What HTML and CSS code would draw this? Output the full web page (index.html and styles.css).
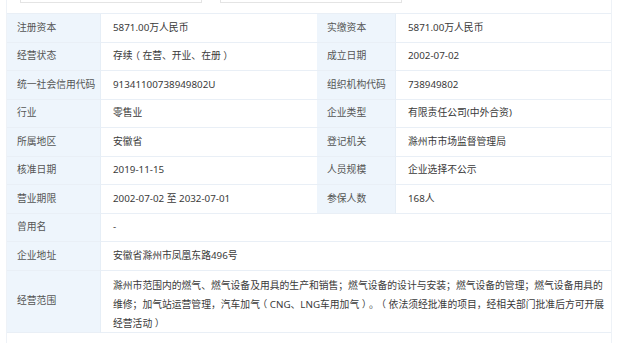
FILE: index.html
```html
<!DOCTYPE html>
<html lang="zh-CN">
<head>
<meta charset="utf-8">
<title>工商信息</title>
<link rel="stylesheet" href="styles.css">
</head>
<body>
<div class="info">
  <div class="search">
    <div class="box"></div>
    <div class="box"></div>
  </div>
  <div class="grid">
    <div class="lbl">注册资本</div><div class="val">5871.00万人民币</div>
    <div class="lbl">实缴资本</div><div class="val">5871.00万人民币</div>

    <div class="lbl">经营状态</div><div class="val">存续<span class="pb">（</span>在营、开业、在册<span class="pb">）</span></div>
    <div class="lbl">成立日期</div><div class="val">2002-07-02</div>

    <div class="lbl">统一社会信用代码</div><div class="val">91341100738949802U</div>
    <div class="lbl">组织机构代码</div><div class="val">738949802</div>

    <div class="lbl">行业</div><div class="val">零售业</div>
    <div class="lbl">企业类型</div><div class="val">有限责任公司(中外合资)</div>

    <div class="lbl">所属地区</div><div class="val">安徽省</div>
    <div class="lbl">登记机关</div><div class="val">滁州市市场监督管理局</div>

    <div class="lbl">核准日期</div><div class="val">2019-11-15</div>
    <div class="lbl">人员规模</div><div class="val">企业选择不公示</div>

    <div class="lbl">营业期限</div><div class="val">2002-07-02 至 2032-07-01</div>
    <div class="lbl">参保人数</div><div class="val">168人</div>

    <div class="lbl">曾用名</div><div class="val span3">-</div>

    <div class="lbl">企业地址</div><div class="val span3">安徽省滁州市凤凰东路496号</div>

    <div class="lbl tall">经营范围</div>
    <div class="val span3 scope">滁州市范围内的燃气、燃气设备及用具的生产和销售；燃气设备的设计与安装；燃气设备的管理；燃气设备用具的<br>维修；加气站运营管理，汽车加气<span class="pb">（</span>CNG、LNG车用加气<span class="pb">）</span><span class="pd">。</span><span class="pb">（</span>依法须经批准的项目，经相关部门批准后方可开展<br>经营活动<span class="pb">）</span></div>
  </div>
</div>
</body>
</html>
```

FILE: styles.css
```css
html, body {
  margin: 0;
  padding: 0;
  background: #ffffff;
}

body {
  font-family: "Noto Sans", "Noto Sans CJK SC", sans-serif;
  font-size: 9.8px;
  color: #333333;
  text-spacing-trim: space-all;
}

.pb,
.pd {
  font-family: "Noto Sans CJK SC", sans-serif;
  font-feature-settings: "halt" 1;
  display: inline-block;
  width: 1em;
}

.pb {
  text-align: center;
}

.pd {
  text-align: left;
}

.info {
  margin-left: 6px;
  width: 604px;
  height: 343px;
  border-left: 1px solid #eef2f7;
  border-right: 1px solid #eef2f7;
}

.search {
  display: flex;
  gap: 18px;
  padding-left: 13px;
  margin-bottom: 10px;
}

.box {
  width: 180px;
  height: 2px;
  background: #ffffff;
  border: 1px solid #e4e4e4;
  border-top: none;
}

.grid {
  display: grid;
  grid-template-columns: 94px 216px 79px 215px;
  grid-auto-rows: 28.5px;
  border-top: 1px solid #e9eff6;
}

.lbl,
.val {
  display: flex;
  align-items: center;
  box-sizing: border-box;
  border-bottom: 1px solid #e9eff6;
  line-height: 14px;
  white-space: nowrap;
}

.lbl {
  background: #eef5fc;
  color: #555555;
  padding-left: 10px;
  border-right: 1px solid #e6eef6;
}

.val {
  background: #ffffff;
  color: #3a3a3a;
  padding-left: 12px;
}

.span3 {
  grid-column: span 3;
}

.tall {
  height: 62px;
}

.scope {
  height: 62px;
  display: block;
  line-height: 18px;
  padding-top: 6px;
}
```
